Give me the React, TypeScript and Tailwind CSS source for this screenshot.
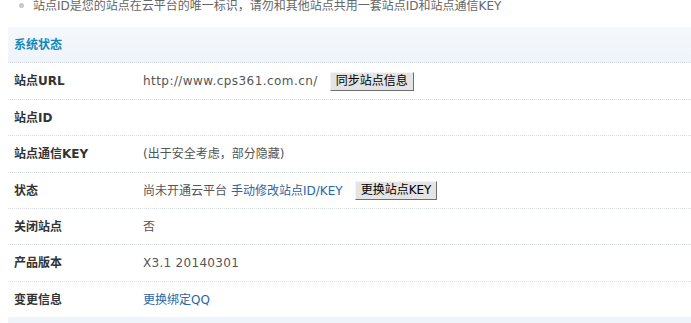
const font = { fontFamily: '"DejaVu Sans", "Noto Sans CJK SC", sans-serif' };

function Btn({ children }: { children: React.ReactNode }) {
  return (
    <button className="ml-[12px] h-[19px] px-[5px] text-[12px] leading-[17px] text-black bg-[#e4e4e4] border border-t-[#f4f4f4] border-l-[#f4f4f4] border-b-[#6f6f6f] border-r-[#6f6f6f]">
      {children}
    </button>
  );
}

function Row({ label, h, children }: { label: string; h: string; children?: React.ReactNode }) {
  return (
    <div className={`flex items-center ${h} border-b border-dotted border-[#d8dde2]`}>
      <div className="w-[135px] pl-[6px] font-bold text-[12px] text-[#333]">{label}</div>
      <div className="flex items-center text-[12px] text-[#555]">{children}</div>
    </div>
  );
}

export default function App() {
  const link = 'text-[#2a66a6]';
  return (
    <div className="w-[691px] h-[323px] overflow-hidden bg-white" style={font}>
      <div className="h-[27px] flex items-start pl-[19px]">
        <span className="mt-[3px] w-[5px] h-[5px] rounded-full bg-[#c8c8c8]"></span>
        <span className="ml-[9px] -mt-[1px] text-[12px] leading-[14px] text-[#666]">
          站点ID是您的站点在云平台的唯一标识，请勿和其他站点共用一套站点ID和站点通信KEY
        </span>
      </div>
      <div className="ml-[8px]">
        <div className="flex items-center h-[36px] bg-gradient-to-b from-[#f5f8fc] to-[#eef4fa] border-b border-dotted border-[#d8dde2]">
          <span className="pl-[6px] font-bold text-[12px] text-[#1188b8]">系统状态</span>
        </div>
        <Row label="站点URL" h="h-[37px]">
          <span className="tracking-[0.44px]">http://www.cps361.com.cn/</span>
          <Btn>同步站点信息</Btn>
        </Row>
        <Row label="站点ID" h="h-[36px]" />
        <Row label="站点通信KEY" h="h-[37px]">
          <span>(出于安全考虑，部分隐藏)</span>
        </Row>
        <Row label="状态" h="h-[36px]">
          <span>尚未开通云平台</span>
          <span className={`ml-[4px] ${link}`}>手动修改站点ID/KEY</span>
          <Btn>更换站点KEY</Btn>
        </Row>
        <Row label="关闭站点" h="h-[36px]">
          <span>否</span>
        </Row>
        <Row label="产品版本" h="h-[37px]">
          <span className="tracking-[0.3px]">X3.1 20140301</span>
        </Row>
        <div className="flex items-center h-[35px]">
          <div className="w-[135px] pl-[6px] font-bold text-[12px] text-[#333]">变更信息</div>
          <span className={`text-[12px] ${link}`}>更换绑定QQ</span>
        </div>
        <div className="h-[20px] bg-[#eef4fa]"></div>
      </div>
    </div>
  );
}
